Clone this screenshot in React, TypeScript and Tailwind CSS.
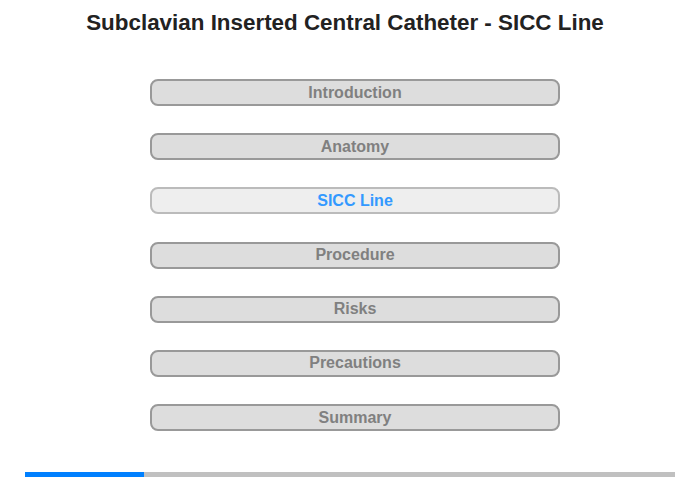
const items = [
  "Introduction",
  "Anatomy",
  "SICC Line",
  "Procedure",
  "Risks",
  "Precautions",
  "Summary",
];

const App = () => {
  return (
    <div className="w-[700px] h-[480px] bg-white flex flex-col font-['Liberation_Sans',Arial,sans-serif]">
      <h1 className="pt-[10px] pr-[10px] h-[79px] text-center text-[22.4px] leading-[26px] font-bold text-[#222222]">
        Subclavian Inserted Central Catheter - SICC Line
      </h1>
      <div className="flex flex-col items-center gap-[27.2px] pl-[10px]">
        {items.map((item) => {
          const active = item === "SICC Line";
          return (
            <button
              key={item}
              className={
                active
                  ? "w-[410px] h-[27px] rounded-[8px] border-2 border-[#bbbbbb] bg-[#eeeeee] text-[#3399ff] text-[16px] font-bold leading-none"
                  : "w-[410px] h-[27px] rounded-[8px] border-2 border-[#999999] bg-[#dddddd] text-[#808080] text-[16px] font-bold leading-none"
              }
            >
              {item}
            </button>
          );
        })}
      </div>
      <div className="mt-[41px] mx-[25px] h-[5px] bg-[#c0c0c0] flex">
        <div className="w-[119px] h-full bg-[#0080ff]" />
      </div>
    </div>
  );
};

export default App;
